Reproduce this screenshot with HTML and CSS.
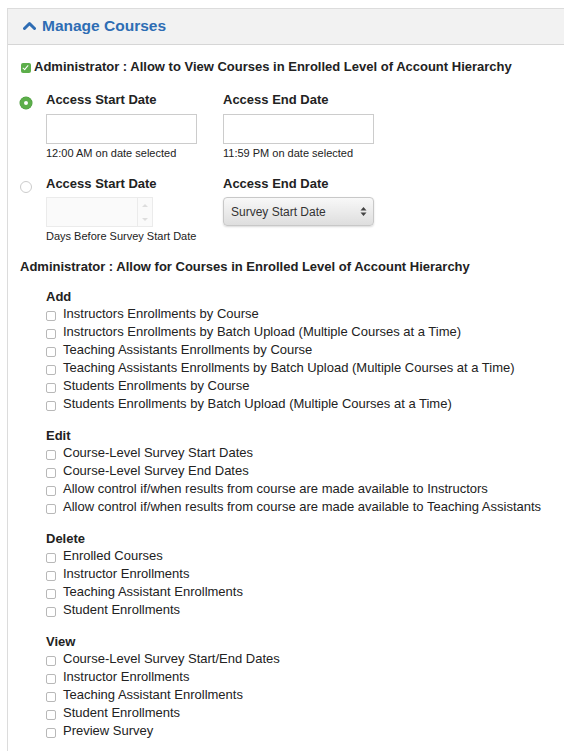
FILE: index.html
```html
<!DOCTYPE html>
<html lang="en">
<head>
    <meta charset="UTF-8">
    <title>Manage Courses</title>
    <link rel="stylesheet" href="styles.css">
</head>
<body>
    <div class="panel">
        <div class="panel-heading">
            <svg class="chevron" width="13" height="9" viewBox="0 0 13 9">
                <path d="M1.5 7.5 L6.5 2.5 L11.5 7.5" fill="none" stroke="#2e6db4" stroke-width="3" stroke-linecap="round" stroke-linejoin="round"/>
            </svg>
            <span class="panel-title">Manage Courses</span>
        </div>
        <div class="panel-body">
            <label class="view-option">
                <input type="checkbox" class="green-check" checked>
                Administrator : Allow to View Courses in Enrolled Level of Account Hierarchy
            </label>

            <!-- fixed dates -->
            <div class="date-row">
                <input type="radio" name="access" class="radio" checked>
                <div class="date-col">
                    <div class="date-label">Access Start Date</div>
                    <input type="text" class="text-input">
                    <div class="hint">12:00 AM on date selected</div>
                </div>
                <div class="date-col">
                    <div class="date-label">Access End Date</div>
                    <input type="text" class="text-input">
                    <div class="hint">11:59 PM on date selected</div>
                </div>
            </div>

            <!-- relative dates -->
            <div class="date-row second">
                <input type="radio" name="access" class="radio">
                <div class="date-col">
                    <div class="date-label">Access Start Date</div>
                    <div class="number-input">
                        <span class="number-field"></span>
                        <span class="spinner">
                            <span class="spin-up"></span>
                            <span class="spin-down"></span>
                        </span>
                    </div>
                    <div class="hint">Days Before Survey Start Date</div>
                </div>
                <div class="date-col">
                    <div class="date-label">Access End Date</div>
                    <div class="select-box">
                        <span>Survey Start Date</span>
                        <svg width="7" height="11" viewBox="0 0 7 11">
                            <path d="M3.5 1 L6.5 4.5 L0.5 4.5 Z M3.5 10 L6.5 6.5 L0.5 6.5 Z" fill="#444"/>
                        </svg>
                    </div>
                </div>
            </div>

            <div class="section-title">Administrator : Allow for Courses in Enrolled Level of Account Hierarchy</div>

            <div class="group">
                <div class="group-title">Add</div>
                <label class="option"><input type="checkbox">Instructors Enrollments by Course</label>
                <label class="option"><input type="checkbox">Instructors Enrollments by Batch Upload (Multiple Courses at a Time)</label>
                <label class="option"><input type="checkbox">Teaching Assistants Enrollments by Course</label>
                <label class="option"><input type="checkbox">Teaching Assistants Enrollments by Batch Upload (Multiple Courses at a Time)</label>
                <label class="option"><input type="checkbox">Students Enrollments by Course</label>
                <label class="option"><input type="checkbox">Students Enrollments by Batch Upload (Multiple Courses at a Time)</label>
            </div>

            <div class="group">
                <div class="group-title">Edit</div>
                <label class="option"><input type="checkbox">Course-Level Survey Start Dates</label>
                <label class="option"><input type="checkbox">Course-Level Survey End Dates</label>
                <label class="option"><input type="checkbox">Allow control if/when results from course are made available to Instructors</label>
                <label class="option"><input type="checkbox">Allow control if/when results from course are made available to Teaching Assistants</label>
            </div>

            <div class="group">
                <div class="group-title">Delete</div>
                <label class="option"><input type="checkbox">Enrolled Courses</label>
                <label class="option"><input type="checkbox">Instructor Enrollments</label>
                <label class="option"><input type="checkbox">Teaching Assistant Enrollments</label>
                <label class="option"><input type="checkbox">Student Enrollments</label>
            </div>

            <div class="group">
                <div class="group-title">View</div>
                <label class="option"><input type="checkbox">Course-Level Survey Start/End Dates</label>
                <label class="option"><input type="checkbox">Instructor Enrollments</label>
                <label class="option"><input type="checkbox">Teaching Assistant Enrollments</label>
                <label class="option"><input type="checkbox">Student Enrollments</label>
                <label class="option"><input type="checkbox">Preview Survey</label>
            </div>
        </div>
    </div>
</body>
</html>
```

FILE: styles.css
```css
body {
    margin: 0;
    font-family: "Liberation Sans", Arial, sans-serif;
    font-size: 13px;
    color: #333;
    background-color: white;
    overflow: hidden;
}
.panel {
    margin: 8px -20px 0 7px;
    border-top: 1px solid #dcdcdc;
    border-left: 1px solid #dcdcdc;
    min-height: 760px;
}
.panel-heading {
    display: flex;
    align-items: center;
    height: 33px;
    padding: 0 0 2px 15px;
    background-color: #f2f2f2;
    border-bottom: 1px solid #d6d6d6;
}
.chevron {
    margin-right: 6px;
    margin-top: -1px;
}
.panel-title {
    color: #2e6db4;
    font-size: 15.5px;
    font-weight: bold;
}
.panel-body {
    padding: 13px 0 0 12px;
}
.view-option {
    display: flex;
    align-items: center;
    font-weight: bold;
    color: #222;
    line-height: 18px;
}
input[type="checkbox"],
input[type="radio"] {
    -webkit-appearance: none;
    appearance: none;
    margin: 0;
    flex: none;
}
.green-check {
    width: 10px;
    height: 10px;
    margin: 1px 3px 0 1px !important;
    border-radius: 2px;
    background-color: #5cae4a;
    position: relative;
}
.green-check::after {
    content: "";
    position: absolute;
    left: 3px;
    top: 1px;
    width: 2px;
    height: 5px;
    border: solid white;
    border-width: 0 1.5px 1.5px 0;
    transform: rotate(40deg);
}
.date-row {
    display: flex;
    margin-top: 15px;
}
.date-row.second {
    margin-top: 14px;
}
.radio {
    width: 12px;
    height: 12px;
    border-radius: 50%;
    border: 1px solid #ccc;
    background-color: white;
    margin: 6px 14px 0 0 !important;
    box-sizing: border-box;
}
.radio:checked {
    border: 4px solid #5cae4a;
    box-shadow: 0 0 0 0.5px #4a9a3b;
}
.date-col {
    width: 177px;
}
.date-label {
    font-weight: bold;
    color: #222;
    line-height: 18px;
}
.text-input {
    display: block;
    box-sizing: border-box;
    width: 151px;
    height: 30px;
    margin-top: 5px;
    border: 1px solid #ccc;
    background-color: white;
}
.hint {
    font-size: 11px;
    line-height: 16px;
    margin-top: 1px;
    color: #222;
}
.number-input {
    display: flex;
    box-sizing: border-box;
    width: 107px;
    height: 30px;
    margin-top: 4px;
    border: 1px solid #ebebeb;
    background-color: #fafafa;
}
.number-field {
    flex: 1;
    border-right: 1px solid #ebebeb;
}
.spinner {
    width: 14px;
    display: flex;
    flex-direction: column;
    justify-content: space-around;
    align-items: center;
}
.spin-up,
.spin-down {
    width: 0;
    height: 0;
    border-left: 3px solid transparent;
    border-right: 3px solid transparent;
}
.spin-up {
    border-bottom: 3px solid #ddd;
}
.spin-down {
    border-top: 3px solid #ddd;
}
.select-box {
    display: flex;
    align-items: center;
    justify-content: space-between;
    box-sizing: border-box;
    width: 151px;
    height: 29px;
    margin-top: 4px;
    padding: 0 6px 0 7px;
    border: 1px solid #c8c8c8;
    border-radius: 4px;
    background: linear-gradient(#f8f8f8, #dedede);
    box-shadow: 0 1px 2px rgba(0, 0, 0, 0.15);
    font-size: 12px;
    color: #333;
}
.section-title {
    margin-top: 14px;
    font-weight: bold;
    color: #222;
    line-height: 18px;
}
.group {
    margin: 12px 0 0 26px;
}
.group + .group {
    margin-top: 14px;
}
.group-title {
    font-weight: bold;
    color: #222;
    line-height: 17px;
}
.option {
    display: flex;
    align-items: center;
    line-height: 18px;
    color: #222;
}
.option input {
    width: 10px;
    height: 10px;
    margin: 3px 7px 0 0;
    border: 1px solid #b8b8b8;
    border-radius: 2px;
    background-color: white;
    box-sizing: border-box;
}
```
